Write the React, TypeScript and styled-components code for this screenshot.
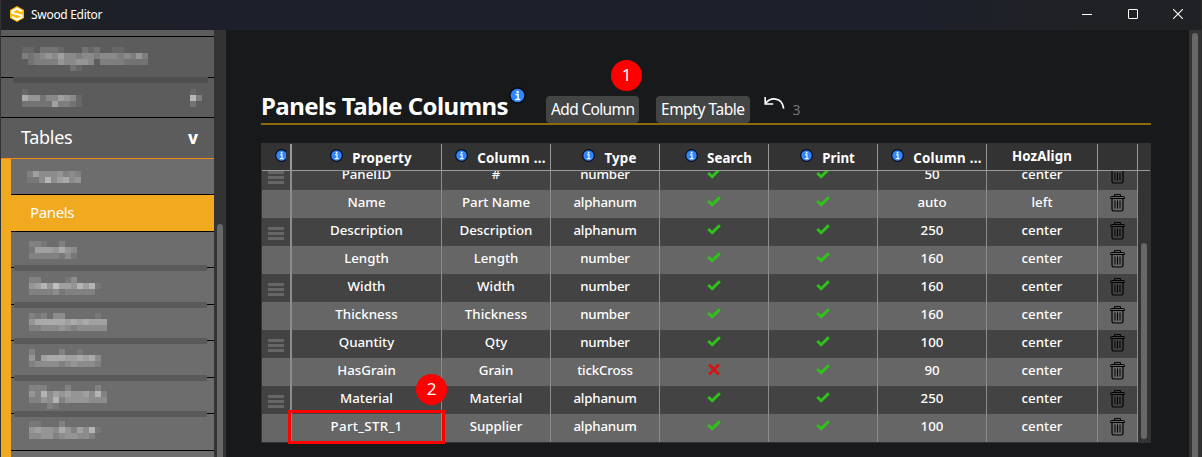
import React from 'react';
import styled, { createGlobalStyle, css } from 'styled-components';

const GlobalStyle = createGlobalStyle`
  * { box-sizing: border-box; }
  body {
    margin: 0;
    overflow: hidden;
    background: #17191a;
    color: #fff;
    font-family: 'Noto Sans', 'Open Sans', sans-serif;
  }
`;

const Window = styled.div`
  display: flex;
  flex-direction: column;
  width: 1202px;
  height: 457px;
  overflow: hidden;
  border-left: 1px solid #333;
  border-right: 1px solid #2b2b2b;
`;

const TitleBar = styled.header`
  display: flex;
  align-items: center;
  flex: none;
  height: 30px;
  padding: 0 18px 2px 9px;
  background: linear-gradient(90deg, #1f2124 0, #1d202a 170px, #1c202b 900px, #202124 1090px);
`;

const AppName = styled.span`
  flex: 1;
  margin: 2px 0 0 7px;
  font-size: 12px;
  line-height: 16px;
  letter-spacing: -0.3px;
`;

const WindowControls = styled.div`
  display: flex;
  gap: 35.5px;
`;

const Body = styled.div`
  display: flex;
  flex: 1;
  min-height: 0;
`;

const Sidebar = styled.nav`
  display: flex;
  flex-direction: column;
  width: 213px;
  background: #5c5c5c;
  overflow: hidden;
`;

const redaction = css`
  &::after {
    content: '';
    position: absolute;
    height: 6px;
  }
`;

const Group = styled.div<{ $height: number; $active?: boolean; $bar?: boolean }>`
  position: relative;
  display: flex;
  flex: none;
  align-items: flex-start;
  justify-content: space-between;
  height: ${(p) => p.$height}px;
  border-bottom: 1px solid ${(p) => (p.$active ? '#f58a06' : '#000')};
  ${(p) => p.$bar && redaction}
  &::after {
    left: 12px;
    right: 6px;
    bottom: -6px;
    z-index: 1;
    background: #4f4f4f;
  }
`;

const GroupLabel = styled.span`
  padding: 7px 0 0 20px;
  font-size: 18px;
  line-height: 25px;
  letter-spacing: -0.3px;
`;

const Chevron = styled.span`
  padding: 7px 16px 0 0;
  font-size: 17px;
  font-weight: 800;
  line-height: 25px;
`;

const SubList = styled.div`
  flex: none;
  padding-left: 10px;
  background: #f1a91f;
`;

const SubItem = styled.div<{ $height: number; $selected?: boolean; $bar?: boolean }>`
  position: relative;
  display: flex;
  align-items: flex-start;
  height: ${(p) => p.$height}px;
  border-bottom: 1px solid #000;
  background: ${(p) => (p.$selected ? '#f1a91f' : '#6d6d6d')};
  ${(p) => p.$bar && redaction}
  &::after {
    left: 3px;
    right: 7px;
    bottom: -4px;
    z-index: 1;
    background: #5a5a5a;
  }
`;

const SubLabel = styled.span`
  padding: 7px 0 0 19px;
  font-size: 15px;
  line-height: 21px;
  letter-spacing: -0.35px;
`;

const Track = styled.div<{ $top: number }>`
  flex: none;
  width: 12px;
  padding: ${(p) => p.$top}px 3px 0;
  background: #333;
`;

const Thumb = styled.div`
  height: 100%;
  border-radius: 3px 3px 0 0;
  background: #686868;
`;

const Main = styled.main`
  flex: 1;
  min-width: 0;
  padding: 63px 38px 0 35px;
`;

const Heading = styled.div`
  display: flex;
  align-items: flex-start;
  height: 32px;
  border-bottom: 2px solid #8a690f;
`;

const Title = styled.h1`
  width: 248px;
  margin: -4px 0 0;
  font-size: 24px;
  font-weight: 700;
  line-height: 33px;
  letter-spacing: -0.55px;
  white-space: nowrap;
`;

const TitleInfo = styled.div`
  width: 37px;
  margin-top: -6px;
  line-height: 0;
`;

const Button = styled.button<{ $width: number; $tracking: number }>`
  flex: none;
  width: ${(p) => p.$width}px;
  height: 27px;
  margin: 3px 17px 0 0;
  padding: 0 0 0 5px;
  border: 0;
  border-radius: 4px;
  background: #434444;
  color: #fff;
  font: 400 15.5px/27px 'Noto Sans', sans-serif;
  letter-spacing: ${(p) => p.$tracking}px;
  text-align: left;
  white-space: nowrap;
`;

const UndoIcon = styled.svg`
  margin: 3px 8px 0 -3.5px;
`;

const UndoCount = styled.span`
  margin-top: 7px;
  color: #777;
  font-size: 14px;
  line-height: 20px;
`;

const Table = styled.section`
  display: flex;
  flex-direction: column;
  height: 300px;
  margin-top: 18px;
  border: 1px solid #333;
  background: #333;
`;

const columns = '30px 150px 109px 109px 109px 109px 109px 111px 40px';

const HeadRow = styled.div`
  display: grid;
  flex: none;
  grid-template-columns: ${columns};
  height: 27px;
  border-bottom: 1px solid #999;
`;

const HeadCell = styled.div<{ $first?: boolean; $plain?: boolean }>`
  display: flex;
  align-items: flex-start;
  justify-content: ${(p) => (p.$first ? 'flex-start' : 'center')};
  gap: 9px;
  overflow: hidden;
  padding: ${(p) => (p.$first ? '5px 0 0 13px' : p.$plain ? '2px 0 0' : '5px 0 0 9px')};
  border-right: ${(p) => (p.$first ? 2 : 1)}px solid #999;
  font-size: 13.3px;
  font-weight: 700;
  line-height: 20px;
  white-space: nowrap;
`;

const HeadText = styled.span<{ $tracking: number; $plain?: boolean }>`
  margin-top: ${(p) => (p.$plain ? 0 : -1)}px;
  letter-spacing: ${(p) => p.$tracking}px;
`;

const HeadInfo = styled.span<{ $clip?: boolean }>`
  flex: none;
  width: ${(p) => (p.$clip ? 11 : 13)}px;
  overflow: hidden;
  line-height: 0;
`;

const Viewport = styled.div`
  display: flex;
  flex: 1;
  min-height: 0;
  overflow: hidden;
`;

const Rows = styled.div`
  display: flex;
  flex: none;
  flex-direction: column;
  justify-content: flex-end;
  width: 876px;
`;

const Row = styled.div<{ $light: boolean }>`
  display: grid;
  flex: none;
  grid-template-columns: ${columns};
  height: 28px;
  background: ${(p) => (p.$light ? '#666' : '#434343')};
`;

const Cell = styled.div<{ $first?: boolean; $tracking?: number }>`
  display: flex;
  justify-content: center;
  border-right: ${(p) => (p.$first ? 2 : 1)}px solid #8c8c8c;
  font-size: 13.3px;
  font-weight: 500;
  line-height: 24px;
  letter-spacing: ${(p) => p.$tracking ?? 0}px;
  white-space: nowrap;
`;

const Grip = styled.div`
  width: 16px;
  height: 13px;
  margin-top: 9px;
  background: repeating-linear-gradient(#666 0 3px, transparent 3px 5px);
`;

const TableTrack = styled.div`
  flex: 1;
  padding: 72px 3px 3px;
`;

const TableThumb = styled.div`
  width: 6px;
  height: 100%;
  border-radius: 3px;
  background: #686868;
`;

const Marker = styled.div<{ $x: number; $y: number }>`
  position: absolute;
  left: ${(p) => p.$x}px;
  top: ${(p) => p.$y}px;
  z-index: 3;
  width: 31px;
  height: 31px;
  border-radius: 50%;
  background: #f00;
  font-size: 17px;
  line-height: 30px;
  text-align: center;
`;

const Highlight = styled.div`
  position: absolute;
  left: 288px;
  top: 410px;
  z-index: 2;
  width: 157px;
  height: 34px;
  border: 3px solid #f00;
`;

const MosaicSvg = styled.svg<{ $x: number; $y: number }>`
  display: block;
  flex: none;
  margin: ${(p) => p.$y}px 0 0 ${(p) => p.$x}px;
`;

/* Pixelated label: each digit is the strength of one 6px block. */
function Mosaic({ rows, x, y }: { rows: string[]; x: number; y: number }) {
  const width = Math.max(...rows.map((r) => r.length)) * 6;
  return (
    <MosaicSvg $x={x} $y={y} width={width} height={rows.length * 6} shapeRendering="crispEdges">
      {rows.flatMap((row, r) =>
        [...row].map((level, c) =>
          level === '0' ? null : (
            <rect key={`${r}-${c}`} x={c * 6} y={r * 6} width="6" height="6" fill="#fff" fillOpacity={Number(level) * 0.07} />
          ),
        ),
      )}
    </MosaicSvg>
  );
}

function InfoIcon({ size }: { size: number }) {
  return (
    <svg width={size} height={size} viewBox="0 0 17 17">
      <circle cx="8.5" cy="8.5" r="7.6" fill="#2f86ff" stroke="#070b14" strokeWidth="1.5" />
      <circle cx="8.6" cy="4.9" r="1.25" fill="#fff" />
      <path d="M6.5 7.5h2.6v5M6.3 12.5h4.9" fill="none" stroke="#fff" strokeWidth="1.5" />
    </svg>
  );
}

const MarkSvg = styled.svg`
  margin-top: 6px;
`;

function Tick() {
  return (
    <MarkSvg width="14" height="11" viewBox="0 0 14 11">
      <path d="M1.2 5 5.2 8.7 12.8 1.2" fill="none" stroke="#2fc41a" strokeWidth="2.8" />
    </MarkSvg>
  );
}

function Cross() {
  return (
    <MarkSvg as="svg" width="14" height="12" viewBox="0 0 14 12">
      <path d="M2 .5 12 10.5M12 .5 2 10.5" fill="none" stroke="#d01717" strokeWidth="3" />
    </MarkSvg>
  );
}

const TrashSvg = styled.svg`
  margin-top: 4px;
`;

function Trash() {
  return (
    <TrashSvg width="15" height="18" viewBox="0 0 15 18" fill="none" stroke="#000">
      <path d="M4.5 2.2V.6h6v1.6" strokeWidth="1" />
      <path d="M.5 4.5v-1q0-1 1-1h12q1 0 1 1v1z" strokeWidth="1" />
      <path d="M2 4.5v10.8q0 1.7 1.6 1.7h7.8q1.6 0 1.6-1.7V4.5" strokeWidth="1.2" />
      <path d="M5 6.5v8M7.5 6.5v8M10 6.5v8" strokeWidth="1" />
    </TrashSvg>
  );
}

function Logo() {
  return (
    <svg width="14" height="16" viewBox="0 0 14 16">
      <path d="M7 0 14 4v8l-7 4-7-4V4z" fill="#fbb900" />
      <path d="M12 5.4 7 2.6 2.2 5.3v1.6L11.8 9.4v1.5L7 13.6 2 10.8" fill="none" stroke="#fff" strokeWidth="2" />
    </svg>
  );
}

const heads: { text: string; tracking: number; plain?: boolean }[] = [
  { text: 'Property', tracking: 0.2 },
  { text: 'Column ...', tracking: 0.3 },
  { text: 'Type', tracking: 0.2 },
  { text: 'Search', tracking: 0.1 },
  { text: 'Print', tracking: 0 },
  { text: 'Column ...', tracking: 0.3 },
  { text: 'HozAlign', tracking: 0.1, plain: true },
];

const records: [string, string, string, boolean, string, string][] = [
  ['PanelID', '#', 'number', true, '50', 'center'],
  ['Name', 'Part Name', 'alphanum', true, 'auto', 'left'],
  ['Description', 'Description', 'alphanum', true, '250', 'center'],
  ['Length', 'Length', 'number', true, '160', 'center'],
  ['Width', 'Width', 'number', true, '160', 'center'],
  ['Thickness', 'Thickness', 'number', true, '160', 'center'],
  ['Quantity', 'Qty', 'number', true, '100', 'center'],
  ['HasGrain', 'Grain', 'tickCross', false, '90', 'center'],
  ['Material', 'Material', 'alphanum', true, '250', 'center'],
  ['Part_STR_1', 'Supplier', 'alphanum', true, '100', 'center'],
];

export default function App() {
  return (
    <>
      <GlobalStyle />
      <Window>
        <TitleBar>
          <Logo />
          <AppName>Swood Editor</AppName>
          <WindowControls>
            <svg width="10" height="10"><path d="M0 5.5h10" stroke="#fff" /></svg>
            <svg width="10" height="10"><rect x=".5" y=".5" width="9" height="9" rx=".5" fill="none" stroke="#fff" /></svg>
            <svg width="10" height="10"><path d="M0 0 10 10M10 0 0 10" stroke="#fff" strokeWidth="1.1" /></svg>
          </WindowControls>
        </TitleBar>
        <Body>
          <Sidebar>
            <Group $height={7} />
            <Group $height={41} $bar>
              <Mosaic x={21} y={10} rows={['110222100021200110000', '323454644344344434353', '023333544554033332222', '000000002100000000000']} />
            </Group>
            <Group $height={40}>
              <Mosaic x={21} y={11} rows={['1000000000', '7552446541', '2222263321']} />
              <Mosaic x={0} y={11} rows={['1000', '8300', '2000']} />
            </Group>
            <Group $height={41} $active>
              <GroupLabel>Tables</GroupLabel>
              <Chevron>v</Chevron>
            </Group>
            <SubList>
              <SubItem $height={36}>
                <Mosaic x={16} y={12} rows={['253334232', '113735634']} />
              </SubItem>
              <SubItem $height={37} $selected>
                <SubLabel>Panels</SubLabel>
              </SubItem>
              <SubItem $height={36} $bar>
                <Mosaic x={18} y={9} rows={['22100200', '15554643', '22222131']} />
              </SubItem>
              <SubItem $height={37} $bar>
                <Mosaic x={18} y={9} rows={['220000130000', '457485547571', '222231222220']} />
              </SubItem>
              <SubItem $height={36} $bar>
                <Mosaic x={18} y={8} rows={['2120330000010', '4666665656555', '2233343233333']} />
              </SubItem>
              <SubItem $height={37} $bar>
                <Mosaic x={18} y={8} rows={['200002001000', '405666556563', '233332343332']} />
              </SubItem>
              <SubItem $height={36} $bar>
                <Mosaic x={18} y={7} rows={['2220002000020', '4273545445372', '2243724444333', '0002100000000']} />
              </SubItem>
              <SubItem $height={37}>
                <Mosaic x={18} y={7} rows={['110002000000', '454436425371', '334423443320']} />
              </SubItem>
              <SubItem $height={36} />
            </SubList>
          </Sidebar>
          <Track $top={194}><Thumb /></Track>
          <Main>
            <Heading>
              <Title>Panels Table Columns</Title>
              <TitleInfo><InfoIcon size={17} /></TitleInfo>
              <Button $width={93} $tracking={-0.65}>Add Column</Button>
              <Button $width={94} $tracking={-0.45}>Empty Table</Button>
              <UndoIcon width="21" height="14" viewBox="0 0 21 14" fill="none" stroke="#fff">
                <path d="M1.2 1v7h8" strokeWidth="1.6" />
                <path d="M1.6 7.4C6 1.5 18 0 19.7 12.6" strokeWidth="1.7" />
              </UndoIcon>
              <UndoCount>3</UndoCount>
            </Heading>
            <Table>
              <HeadRow>
                <HeadCell $first>
                  <HeadInfo $clip><InfoIcon size={13} /></HeadInfo>
                </HeadCell>
                {heads.map((h, i) => (
                  <HeadCell key={i} $plain={h.plain}>
                    {!h.plain && <HeadInfo><InfoIcon size={13} /></HeadInfo>}
                    <HeadText $tracking={h.tracking} $plain={h.plain}>{h.text}</HeadText>
                  </HeadCell>
                ))}
                <HeadCell />
              </HeadRow>
              <Viewport>
                <Rows>
                  {records.map(([property, label, type, search, width, align], i) => (
                    <Row key={property} $light={i % 2 === 1}>
                      <Cell $first><Grip /></Cell>
                      <Cell $tracking={property.includes('_') ? 0.3 : 0}>{property}</Cell>
                      <Cell>{label}</Cell>
                      <Cell $tracking={-0.2}>{type}</Cell>
                      <Cell>{search ? <Tick /> : <Cross />}</Cell>
                      <Cell><Tick /></Cell>
                      <Cell>{width}</Cell>
                      <Cell>{align}</Cell>
                      <Cell><Trash /></Cell>
                    </Row>
                  ))}
                </Rows>
                <TableTrack><TableThumb /></TableTrack>
              </Viewport>
            </Table>
          </Main>
          <Track $top={3}><Thumb /></Track>
        </Body>
      </Window>
      <Marker $x={611} $y={60}>1</Marker>
      <Marker $x={416} $y={374}>2</Marker>
      <Highlight />
    </>
  );
}
